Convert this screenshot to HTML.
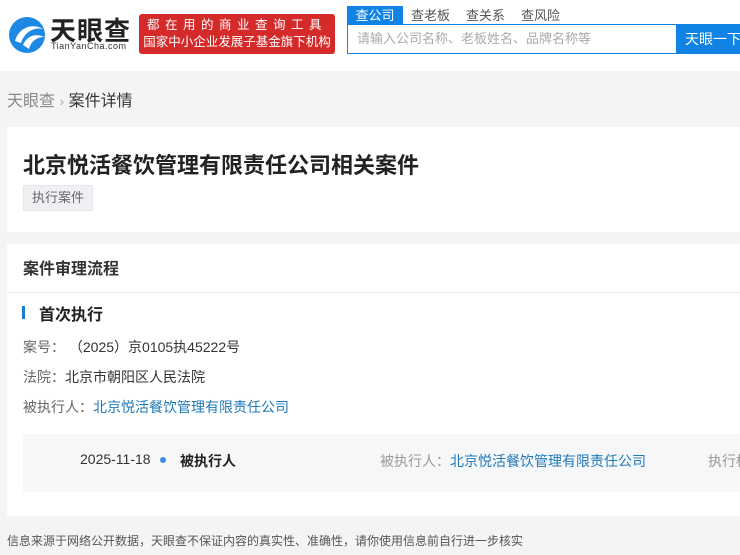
<!DOCTYPE html>
<html><head><meta charset="utf-8"><style>
*{margin:0;padding:0;box-sizing:border-box}
body{width:740px;height:555px;overflow:hidden;background:#f4f4f4;font-family:"Liberation Sans","Noto Sans CJK SC",sans-serif;color:#333;position:relative}
.a{position:absolute;white-space:nowrap}
.hdr{position:absolute;left:0;top:0;width:740px;height:71px;background:#fff}
.card{position:absolute;left:7px;width:740px;background:#fff}
</style></head><body>
<div class="hdr">
 <svg class="a" style="left:7px;top:15px" width="40" height="40" viewBox="0 0 40 40">
  <circle cx="20" cy="20" r="18" fill="#1e88e5"/>
  <path d="M8 26 C12 12 26 8 36 14 C28 12 18 16 14 28 Z" fill="#fff"/>
  <path d="M16 30 C20 20 30 18 37 22 C30 22 24 26 22 34 Z" fill="#fff"/>
 </svg>
 <div class="a" style="left:50px;top:11px;font-size:26px;font-weight:bold;color:#222;letter-spacing:1px">天眼查</div>
 <div class="a" style="left:51px;top:41px;font-size:9px;color:#333;letter-spacing:0.5px">TianYanCha.com</div>
 <div class="a" style="left:139px;top:14px;width:196px;height:40px;background:#d52a2a;border-radius:3px;color:#fff;font-size:12.5px;line-height:17px;text-align:center;padding-top:3px">
  <div style="letter-spacing:5.5px">都在用的商业查询工具</div><div>国家中小企业发展子基金旗下机构</div></div>
 <div class="a" style="left:347px;top:6px;width:56px;height:19px;background:#1183e4;color:#fff;font-size:13px;text-align:center;line-height:19px">查公司</div>
 <div class="a" style="left:411px;top:6px;font-size:13px;color:#555;line-height:19px">查老板</div>
 <div class="a" style="left:466px;top:6px;font-size:13px;color:#555;line-height:19px">查关系</div>
 <div class="a" style="left:521px;top:6px;font-size:13px;color:#555;line-height:19px">查风险</div>
 <div class="a" style="left:347px;top:24px;width:330px;height:30px;border:1px solid #1183e4;font-size:13px;color:#aaa;line-height:28px;padding-left:9px">请输入公司名称、老板姓名、品牌名称等</div>
 <div class="a" style="left:676px;top:24px;width:70px;height:30px;background:#1183e4;color:#fff;font-size:14px;line-height:30px;padding-left:9px">天眼一下</div>
</div>
<div class="a" style="left:7px;top:87px;font-size:16px;color:#888">天眼查 <span style="color:#aaa;font-size:14px">›</span> <span style="color:#333">案件详情</span></div>
<div class="card" style="top:127px;height:105px">
 <div class="a" style="left:16px;top:21px;font-size:22px;font-weight:bold;color:#222">北京悦活餐饮管理有限责任公司相关案件</div>
 <div class="a" style="left:16px;top:58px;width:70px;height:26px;background:#eef0f3;border:1px solid #e3e6ea;border-radius:2px;font-size:13px;color:#666;line-height:24px;text-align:center">执行案件</div>
</div>
<div class="card" style="top:244px;height:272px">
 <div class="a" style="left:16px;top:11px;font-size:16px;font-weight:bold;color:#333">案件审理流程</div>
 <div class="a" style="left:0;top:48px;width:740px;height:1px;background:#eee"></div>
 <div class="a" style="left:15px;top:62px;width:3px;height:13px;background:#1c7ccf"></div>
 <div class="a" style="left:32px;top:57px;font-size:16px;font-weight:bold;color:#222">首次执行</div>
 <div class="a" style="left:16px;top:93px;font-size:14px;color:#666">案号：&nbsp;<span style="color:#333">（2025）京0105执45222号</span></div>
 <div class="a" style="left:16px;top:123px;font-size:14px;color:#666">法院：<span style="color:#333">北京市朝阳区人民法院</span></div>
 <div class="a" style="left:16px;top:153px;font-size:14px;color:#666">被执行人：<span style="color:#1f78b8">北京悦活餐饮管理有限责任公司</span></div>
 <div class="a" style="left:16px;top:190px;width:730px;height:58px;background:#f6f7f9"></div>
 <div class="a" style="left:73px;top:207px;font-size:14px;color:#333">2025-11-18</div>
 <div class="a" style="left:153px;top:213px;width:6px;height:6px;border-radius:50%;background:#3a8ee6"></div>
 <div class="a" style="left:173px;top:207px;font-size:14px;font-weight:bold;color:#222">被执行人</div>
 <div class="a" style="left:373px;top:207px;font-size:14px;color:#999">被执行人：<span style="color:#1f78b8">北京悦活餐饮管理有限责任公司</span></div>
 <div class="a" style="left:701px;top:207px;font-size:14px;color:#999">执行标</div>
</div>
<div class="a" style="left:7px;top:532px;font-size:12px;color:#555">信息来源于网络公开数据，天眼查不保证内容的真实性、准确性，请你使用信息前自行进一步核实</div>
</body></html>
